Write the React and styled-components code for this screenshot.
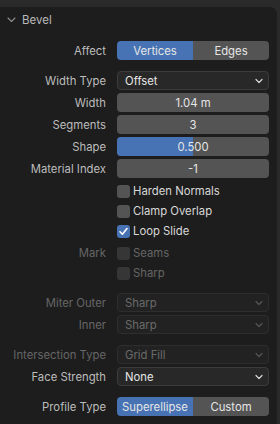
import React, { useState } from 'react';
import styled, { createGlobalStyle } from 'styled-components';

const GlobalStyle = createGlobalStyle`
  html, body {
    margin: 0;
    padding: 0;
    background: #2a2a2a;
    font-family: Inter, "Noto Sans", sans-serif;
    -webkit-font-smoothing: antialiased;
  }
  #root {
    height: 424px;
    overflow: hidden;
  }
`;

const Panel = styled.div`
  margin-top: 7px;
  width: 277px;
  height: 417px;
  background: #1d1d1d;
  border-top-right-radius: 7px;
  box-sizing: border-box;
  padding-bottom: 8px;
`;

const Header = styled.div`
  display: flex;
  align-items: center;
  height: 26px;
  padding-left: 7px;
  gap: 6px;
  color: #b8b8b8;
  font-size: 11.5px;
`;

const Body = styled.div`
  display: flex;
  flex-direction: column;
  padding-top: 8px;
`;

const Row = styled.div`
  display: grid;
  grid-template-columns: 106px 152px;
  column-gap: 11px;
  align-items: center;
  height: ${p => p.$h || 19}px;
  margin-top: ${p => p.$mt || 0}px;
`;

const Label = styled.div`
  text-align: right;
  font-size: 11.3px;
  color: ${p => (p.$disabled ? '#666666' : '#bcbcbc')};
  white-space: nowrap;
`;

const Enum = styled.div`
  display: flex;
  height: 19px;
  border-radius: 4px;
  overflow: hidden;
`;

const EnumItem = styled.div`
  flex: 1;
  display: flex;
  align-items: center;
  justify-content: center;
  font-size: 11.3px;
  color: #e6e6e6;
  background: ${p => (p.$active ? '#4772b3' : '#545454')};
`;

const Dropdown = styled.div`
  display: flex;
  align-items: center;
  justify-content: space-between;
  height: 19px;
  box-sizing: border-box;
  padding: 0 5px 0 7px;
  border-radius: 4px;
  background: ${p => (p.$disabled ? '#222222' : '#282828')};
  border: 1px solid ${p => (p.$disabled ? '#2e2e2e' : '#3c3c3c')};
  color: ${p => (p.$disabled ? '#6a6a6a' : '#e6e6e6')};
  font-size: 11.3px;
`;

const Field = styled.div`
  position: relative;
  height: 19px;
  border-radius: 4px;
  overflow: hidden;
  background: #545454;
  display: flex;
  align-items: center;
  justify-content: center;
  font-size: 11.3px;
  color: #e6e6e6;
`;

const Fill = styled.div`
  position: absolute;
  left: 0;
  top: 0;
  bottom: 0;
  background: #4772b3;
`;

const FieldText = styled.span`
  position: relative;
`;

const Check = styled.label`
  display: flex;
  align-items: center;
  gap: 3px;
  font-size: 11.3px;
  color: ${p => (p.$disabled ? '#666666' : '#d8d8d8')};
`;

const Box = styled.span`
  width: 13px;
  height: 13px;
  border-radius: 3px;
  display: flex;
  align-items: center;
  justify-content: center;
  background: ${p => (p.$checked ? '#4772b3' : p.$disabled ? '#363636' : '#545454')};
`;

const Chevron = ({ color = '#d0d0d0' }) => (
  <svg width="8" height="6" viewBox="0 0 8 6">
    <path d="M1 1.5 L4 4.5 L7 1.5" fill="none" stroke={color} strokeWidth="1.2" strokeLinecap="round" strokeLinejoin="round" />
  </svg>
);

const Select = ({ value, disabled }) => (
  <Dropdown $disabled={disabled}>
    <span>{value}</span>
    <Chevron color={disabled ? '#555' : '#d8d8d8'} />
  </Dropdown>
);

const Checkbox = ({ label, checked, disabled }) => (
  <Check $disabled={disabled}>
    <Box $checked={checked} $disabled={disabled}>
      {checked && (
        <svg width="11" height="11" viewBox="0 0 11 11">
          <path d="M2 5.8 L4.4 8.2 L9 2.6" fill="none" stroke="#fff" strokeWidth="1.6" strokeLinecap="round" strokeLinejoin="round" />
        </svg>
      )}
    </Box>
    {label}
  </Check>
);

export default function App() {
  const [affect, setAffect] = useState('Vertices');
  const [profile, setProfile] = useState('Superellipse');

  return (
    <>
      <GlobalStyle />
      <Panel>
        <Header>
          <svg width="9" height="6" viewBox="0 0 9 6">
            <path d="M1 1 L4.5 4.5 L8 1" fill="none" stroke="#8e8e8e" strokeWidth="1.1" strokeLinecap="round" strokeLinejoin="round" />
          </svg>
          Bevel
        </Header>
        <Body>
          <Row>
            <Label>Affect</Label>
            <Enum>
              {['Vertices', 'Edges'].map(v => (
                <EnumItem key={v} $active={affect === v} onClick={() => setAffect(v)}>{v}</EnumItem>
              ))}
            </Enum>
          </Row>

          <Row $mt={11}>
            <Label>Width Type</Label>
            <Select value="Offset" />
          </Row>
          <Row $mt={3}>
            <Label>Width</Label>
            <Field>1.04 m</Field>
          </Row>
          <Row $mt={3}>
            <Label>Segments</Label>
            <Field>3</Field>
          </Row>
          <Row $mt={3}>
            <Label>Shape</Label>
            <Field>
              <Fill style={{ width: `${0.5 * 100}%` }} />
              <FieldText>0.500</FieldText>
            </Field>
          </Row>
          <Row $mt={3}>
            <Label>Material Index</Label>
            <Field>-1</Field>
          </Row>

          <Row $h={20} $mt={3}>
            <span />
            <Checkbox label="Harden Normals" />
          </Row>
          <Row $h={20}>
            <span />
            <Checkbox label="Clamp Overlap" />
          </Row>
          <Row $h={20}>
            <span />
            <Checkbox label="Loop Slide" checked />
          </Row>
          <Row $h={20} $mt={2}>
            <Label $disabled>Mark</Label>
            <Checkbox label="Seams" disabled />
          </Row>
          <Row $h={20}>
            <span />
            <Checkbox label="Sharp" disabled />
          </Row>

          <Row $mt={10}>
            <Label $disabled>Miter Outer</Label>
            <Select value="Sharp" disabled />
          </Row>
          <Row $mt={3}>
            <Label $disabled>Inner</Label>
            <Select value="Sharp" disabled />
          </Row>

          <Row $mt={11}>
            <Label $disabled>Intersection Type</Label>
            <Select value="Grid Fill" disabled />
          </Row>
          <Row $mt={3}>
            <Label>Face Strength</Label>
            <Select value="None" />
          </Row>

          <Row $mt={11}>
            <Label>Profile Type</Label>
            <Enum>
              {['Superellipse', 'Custom'].map(v => (
                <EnumItem key={v} $active={profile === v} onClick={() => setProfile(v)}>{v}</EnumItem>
              ))}
            </Enum>
          </Row>
        </Body>
      </Panel>
    </>
  );
}
